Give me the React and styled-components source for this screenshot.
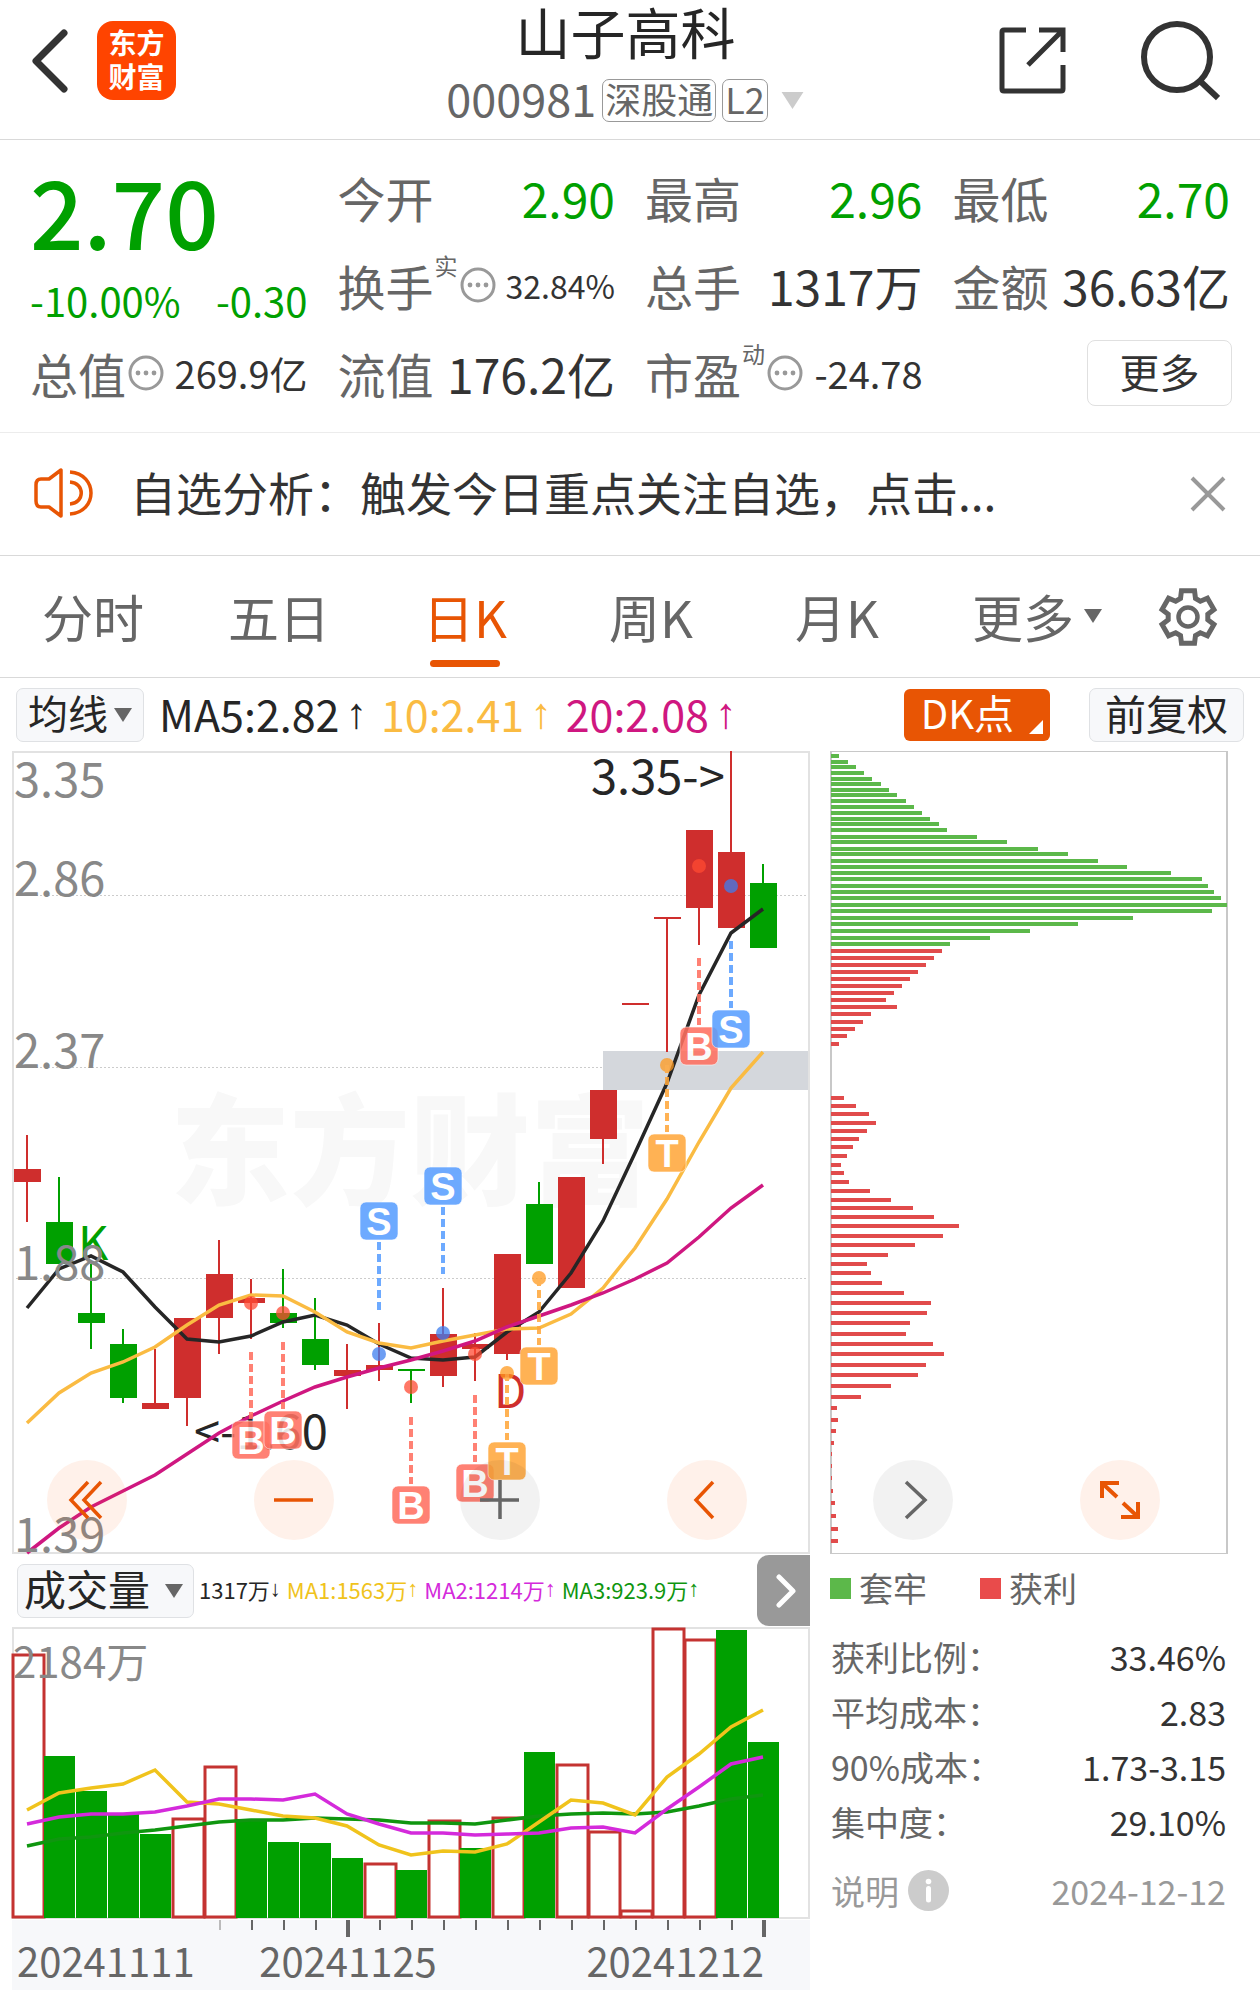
import React, { useState } from "react";
import styled, { createGlobalStyle } from "styled-components";

const GREEN = "#00a000";
const RED = "#cf2e2d";
const ORANGE = "#e85504";

const GlobalStyle = createGlobalStyle`
  * {
    box-sizing: border-box;
  }
  body {
    margin: 0;
    background: #fff;
    color: #333;
    font-family: "Noto Sans CJK SC", "Noto Sans", sans-serif;
  }
  button,
  select {
    margin: 0;
    padding: 0;
    border: none;
    background: none;
    color: inherit;
    font-family: inherit;
    cursor: pointer;
  }
  svg {
    display: block;
  }
`;

// header
const Header = styled.header`
  display: grid;
  grid-template-columns: 1fr auto 1fr;
  height: 140px;
  padding: 0 40px 0 31px;
  border-bottom: 1px solid #d9d9d9;
`;

const HeaderSide = styled.div`
  display: flex;
  align-items: center;
  gap: ${(props) => props.$gap};
  justify-content: ${(props) => (props.$end ? "flex-end" : "flex-start")};
  padding-bottom: 18px;
`;

const IconButton = styled.button`
  display: flex;
  align-items: center;
  justify-content: center;
  flex: none;
`;

const Logo = styled.div`
  width: 79px;
  height: 79px;
  padding: 4px 0;
  border-radius: 16px;
  background: #ff4400;
  color: #fff;
  font-size: 28px;
  font-weight: 700;
  line-height: 34px;
  text-align: center;
`;

const TitleBox = styled.div`
  display: flex;
  flex-direction: column;
  align-items: center;
  gap: 19px;
`;

const StockName = styled.h1`
  margin: 0;
  color: #262626;
  font-size: 55px;
  font-weight: 400;
  line-height: 60px;
`;

const StockMeta = styled.div`
  display: flex;
  align-items: center;
  gap: 6px;
  height: 43px;
`;

const StockCode = styled.span`
  padding-bottom: 6px;
  color: #666;
  font-size: 45px;
  line-height: 43px;
`;

const Tag = styled.span`
  height: 43px;
  padding: 0 2px;
  border: 1px solid #999;
  border-radius: 7px;
  color: #666;
  font-size: 36px;
  line-height: 37px;
`;

const MetaArrow = styled(IconButton)`
  margin-left: 6px;
`;

// quote
const Quote = styled.section`
  display: grid;
  grid-template-columns: repeat(4, 1fr);
  grid-template-rows: repeat(3, 88px);
  column-gap: 30px;
  height: 293px;
  padding: 13px 30px 15px;
  border-bottom: 1px solid #ececec;
`;

const PriceBox = styled.div`
  grid-row: span 2;
  color: ${GREEN};
`;

const Price = styled.div`
  font-size: 94px;
  font-weight: 500;
  line-height: 112px;
`;

const Change = styled.div`
  display: flex;
  justify-content: space-between;
  padding-top: 10px;
  font-size: 40px;
  line-height: 50px;
`;

const Item = styled.div`
  display: flex;
  align-items: center;
  justify-content: space-between;
  white-space: nowrap;
`;

const ItemLabel = styled.span`
  display: flex;
  align-items: center;
  color: #666;
  font-size: 48px;
  line-height: 88px;
`;

const InfoButton = styled(IconButton)`
  margin-left: 2px;
`;

const Mark = styled.small`
  align-self: flex-start;
  padding: 8px 0 0 1px;
  font-size: 23px;
  line-height: 32px;
`;

const ItemValue = styled.span`
  color: ${(props) => props.$color || "#333"};
  font-size: ${(props) => props.$size || "48px"};
  line-height: 88px;
`;

const MoreButton = styled.button`
  align-self: center;
  justify-self: end;
  width: 145px;
  height: 66px;
  margin-right: -2px;
  padding-bottom: 4px;
  border: 1px solid #e0e0e0;
  border-radius: 8px;
  font-size: 40px;
  line-height: 58px;
`;

// notice
const Notice = styled.div`
  display: flex;
  align-items: center;
  height: 123px;
  padding: 0 34px;
  border-bottom: 1px solid #d9d9d9;
`;

const NoticeText = styled.a`
  flex: 1;
  padding: 0 0 6px 36px;
  color: #333;
  font-size: 46px;
  line-height: 60px;
  text-decoration: none;
  white-space: nowrap;
`;

// tabs
const Tabs = styled.nav`
  display: grid;
  grid-template-columns: repeat(6, 186fr) 144fr;
  height: 122px;
  border-bottom: 1px solid #d9d9d9;
`;

const Tab = styled.button`
  display: flex;
  flex-direction: column;
  align-items: center;
  justify-content: flex-end;
  gap: 8px;
  padding-bottom: 10px;
  padding-left: ${(props) => (props.$more ? "28px" : "0")};
  color: ${(props) => (props.$active ? ORANGE : "#666")};
  font-size: 51px;
  line-height: 72px;
  white-space: nowrap;

  &::after {
    content: "";
    width: 70px;
    height: 7px;
    border-radius: 4px;
    background: ${(props) => (props.$active ? ORANGE : "transparent")};
  }
`;

const TabLabel = styled.span`
  display: flex;
  align-items: center;
  gap: 10px;
`;

// indicator bars
const Bar = styled.div`
  display: flex;
  align-items: center;
  height: 73px;
  padding: 0 16px;
`;

const Legend = styled.div`
  display: flex;
  flex: 1;
  gap: ${(props) => props.$gap};
  padding-left: ${(props) => props.$indent};
  padding-bottom: 4px;
  font-size: ${(props) => props.$size};
  line-height: 50px;
  white-space: nowrap;
`;

const LegendItem = styled.span`
  display: flex;
  color: ${(props) => props.$color};
`;

const Arrow = styled.span`
  padding-left: ${(props) => props.$gap || "0"};
  font-family: "Liberation Sans", sans-serif;
`;

const Picker = styled.label`
  display: flex;
  align-items: center;
  gap: ${(props) => props.$gap};
  height: 54px;
  padding: ${(props) => props.$pad};
  border: 1px solid #dfe1e4;
  border-radius: 7px;
  background: #f7f8fa;
`;

const PickerSelect = styled.select`
  appearance: none;
  height: 52px;
  padding-bottom: 5px;
  color: #262626;
  font-size: ${(props) => props.$size};
  line-height: 46px;
`;

const DkButton = styled.button`
  display: flex;
  align-items: flex-end;
  gap: 15px;
  height: 52px;
  padding: 0 7px 7px 17px;
  border-radius: 6px;
  background: ${ORANGE};
  color: #fff;
  font-size: 40px;
  line-height: 44px;
`;

const AdjustButton = styled.button`
  height: 54px;
  margin-left: 39px;
  padding: 0 15px 5px;
  border: 1px solid #dfe1e4;
  border-radius: 7px;
  background: #f7f8fa;
  color: #262626;
  font-size: 41px;
  line-height: 46px;
`;

// charts
const Columns = styled.div`
  position: relative;
  display: grid;
  grid-template-columns: 798fr 398fr;
  column-gap: 20px;
  padding: 0 32px 0 12px;
`;

const Chart = styled.svg`
  width: 100%;
  height: auto;
  overflow: visible;
  font-family: "Noto Sans CJK SC", sans-serif;
`;

const FloatBar = styled.div`
  position: absolute;
  left: 47px;
  right: 100px;
  bottom: 14px;
  display: flex;
  justify-content: space-between;
  pointer-events: none;
`;

const RoundButton = styled.button`
  display: flex;
  align-items: center;
  justify-content: center;
  width: 80px;
  height: 80px;
  border-radius: 50%;
  background: ${(props) =>
    props.$muted ? "rgba(0, 0, 0, 0.05)" : "rgba(255, 100, 20, 0.09)"};
  color: ${(props) => (props.$muted ? "#666" : ORANGE)};
  pointer-events: auto;
`;

const VolumeBar = styled.div`
  display: flex;
  align-items: center;
  height: 73px;
  padding-left: 5px;
`;

const NextButton = styled.button`
  display: flex;
  align-items: center;
  justify-content: center;
  flex: none;
  width: 53px;
  height: 71px;
  padding-left: 4px;
  border-radius: 12px 0 0 12px;
  background: #999;
`;

const CostLegend = styled.div`
  display: flex;
  align-items: center;
  height: 78px;
  padding-bottom: 10px;
  gap: 53px;
  color: #666;
  font-size: 34px;
  line-height: 40px;
`;

const CostKey = styled.span`
  display: flex;
  align-items: center;
  gap: 8px;

  &::before {
    content: "";
    width: 21px;
    height: 21px;
    background: ${(props) => props.$color};
  }
`;

const CostTable = styled.table`
  width: 100%;
  border-spacing: 0;
  font-size: 34px;
  line-height: 50px;

  th {
    padding: 0 0 5px 1px;
    color: #666;
    font-weight: 400;
    text-align: left;
  }
  td {
    padding: 0 2px 5px 0;
    text-align: right;
  }
`;

const CostFoot = styled.div`
  display: flex;
  align-items: center;
  gap: 9px;
  margin-top: 11px;
  padding-left: 1px;
  color: #999;
  font-size: 34px;
  line-height: 55px;

  time {
    flex: 1;
    padding-right: 2px;
    text-align: right;
  }
`;

// [high, top, bottom, low, up]
const candles = [
  [384, 418, 431, 471, 1],
  [426, 471, 513, 513, 0],
  [513, 562, 572, 598, 0],
  [578, 593, 647, 652, 0],
  [598, 652, 658, 658, 1],
  [567, 567, 647, 675, 1],
  [489, 523, 567, 603, 1],
  [528, 547, 552, 588, 1],
  [518, 562, 572, 577, 0],
  [547, 588, 614, 619, 0],
  [593, 619, 625, 658, 1],
  [572, 614, 619, 630, 1],
  [618, 618, 620, 652, 0],
  [537, 583, 625, 636, 1],
  [582, 593, 598, 630, 1],
  [503, 503, 603, 609, 1],
  [431, 453, 513, 513, 0],
  [426, 426, 537, 537, 1],
  [339, 339, 388, 413, 1],
  [252, 252, 254, 254, 1],
  [166, 166, 168, 301, 1],
  [79, 79, 157, 194, 1],
  [0, 101, 177, 177, 1],
  [113, 132, 197, 197, 0],
];

const priceLines = [
  {
    color: "#262626",
    data: [
      557, 518, 505, 521, 556, 588, 591, 585, 571, 564, 574, 593, 607, 609, 606,
      581, 561, 522, 470, 402, 332, 244, 182, 158,
    ],
  },
  {
    color: "#fabb42",
    data: [
      672, 642, 622, 611, 596, 574, 554, 544, 545, 561, 581, 592, 597, 590, 584,
      578, 577, 563, 537, 497, 448, 391, 337, 301,
    ],
  },
  {
    color: "#cf1780",
    data: [
      802, 777, 756, 740, 724, 703, 682, 665, 650, 636, 626, 617, 609, 600, 590,
      576, 565, 554, 542, 528, 512, 486, 457, 434,
    ],
  },
];

const priceLabels = [
  ["3.35", 46],
  ["2.86", 145],
  ["2.37", 317],
  ["1.88", 529],
  ["1.39", 801],
];

const tradeColors = { S: "#5a9fff", B: "#ff7061", T: "#ffa83d" };
const dotColors = { S: "#3d7ef0", B: "#ff4a33", T: "#ff9a1f" };

// [type, day, box y, dash start, dash end, dot y]
const trades = [
  ["B", 7, 689, 601, 668, 552],
  ["B", 8, 679, 591, 658, 562],
  ["S", 11, 470, 491, 559, 603],
  ["B", 12, 754, 666, 733, 636],
  ["S", 13, 435, 456, 523, 582],
  ["B", 14, 732, 644, 711, 603],
  ["T", 15, 710, 622, 689, 622],
  ["T", 16, 615, 527, 594, 527],
  ["T", 20, 402, 314, 381, 314],
  ["B", 21, 295, 207, 274, 115],
  ["S", 22, 278, 190, 257, 135],
];

// [y, length]
const lockedBars = [
  [5, 8], [11, 17], [16, 25], [22, 33], [28, 41], [33, 50], [39, 58],
  [44, 66], [50, 75], [56, 83], [62, 91], [68, 99], [73, 108], [79, 116],
  [86, 146], [91, 176], [98, 207], [103, 237], [110, 267], [116, 296],
  [122, 340], [128, 371], [135, 377], [141, 383], [147, 390], [154, 396],
  [160, 381], [167, 302], [173, 247], [180, 199], [187, 159], [193, 119],
];

const profitBars = [
  [200, 111], [207, 103], [214, 95], [221, 87], [228, 79], [235, 71],
  [242, 63], [249, 55], [256, 66], [263, 40], [271, 32], [278, 24],
  [285, 16], [293, 8], [347, 13], [355, 25], [363, 38], [372, 45],
  [380, 36], [388, 28], [396, 22], [405, 16], [414, 10], [422, 13],
  [431, 18], [440, 39], [449, 60], [457, 82], [466, 103], [475, 128],
  [485, 112], [494, 84], [504, 57], [513, 36], [522, 40], [532, 51],
  [542, 73], [552, 100], [562, 96], [572, 79], [583, 75], [593, 102],
  [603, 113], [614, 95], [624, 87], [635, 60], [646, 30], [657, 6],
  [669, 7], [680, 5], [692, 3], [703, 1], [715, 1], [727, 1], [740, 2],
  [752, 4], [765, 5], [778, 7], [790, 7],
];

// [top, up]
const volumes = [
  [27, 1], [129, 0], [164, 0], [187, 0], [207, 0], [191, 1], [139, 1],
  [192, 0], [215, 0], [216, 0], [231, 0], [236, 1], [243, 0], [193, 1],
  [221, 0], [190, 1], [125, 0], [137, 1], [204, 1], [283, 1], [1, 1],
  [12, 1], [3, 0], [115, 0],
];

const volumeLines = [
  {
    color: "#0f960f",
    data: [
      219, 212, 210, 206, 203, 199, 195, 193, 193, 191, 192, 193, 196, 196, 197,
      193, 189, 187, 186, 187, 185, 179, 172, 168,
    ],
  },
  {
    color: "#f0c31c",
    data: [
      183, 166, 161, 157, 143, 175, 177, 183, 189, 191, 199, 218, 228, 224, 225,
      217, 195, 173, 176, 188, 150, 127, 100, 83,
    ],
  },
  {
    color: "#d42adb",
    data: [
      197, 190, 187, 187, 185, 179, 172, 172, 173, 167, 187, 197, 206, 206, 208,
      207, 206, 201, 200, 206, 182, 160, 137, 130,
    ],
  },
];

const dayX = (i) => 15 + 32 * i;
const toPoints = (data) => data.map((y, i) => `${dayX(i)},${y}`).join(" ");

const Triangle = ({ width = 18, height = 14, color = "#666" }) => (
  <svg width={width} height={height} viewBox="0 0 18 14">
    <path d="M0 0H18L9 14Z" fill={color} />
  </svg>
);

const DotsIcon = () => (
  <svg width="36" height="36" viewBox="0 0 36 36">
    <circle cx="18" cy="18" r="16" fill="none" stroke="#999" strokeWidth="3" />
    <circle cx="10" cy="18" r="2.4" fill="#999" />
    <circle cx="18" cy="18" r="2.4" fill="#999" />
    <circle cx="26" cy="18" r="2.4" fill="#999" />
  </svg>
);

const polar = (deg, r) => {
  const a = (deg * Math.PI) / 180;
  return `${30 + r * Math.sin(a)},${30 - r * Math.cos(a)}`;
};

const gearPoints = [0, 60, 120, 180, 240, 300]
  .map((a) =>
    [
      polar(a - 22, 20),
      polar(a - 14, 27),
      polar(a + 14, 27),
      polar(a + 22, 20),
    ].join(" ")
  )
  .join(" ");

const GearIcon = () => (
  <svg width="60" height="60" viewBox="0 0 60 60" fill="none" stroke="#666">
    <polygon points={gearPoints} strokeWidth="5" />
    <circle cx="30" cy="30" r="9.5" strokeWidth="4.5" />
  </svg>
);

const Stroke = ({ d, width = 3.5 }) => (
  <svg
    width="40"
    height="40"
    viewBox="0 0 40 40"
    fill="none"
    stroke="currentColor"
    strokeWidth={width}
  >
    <path d={d} />
  </svg>
);

const floatButtons = [
  { label: "最早", d: "M21 2 4 20 21 38M34 2 17 20 34 38" },
  { label: "缩小", d: "M0 20H39" },
  { label: "放大", d: "M0 20H39M20 0V39", muted: true },
  { label: "向左", d: "M26 2 9 20 26 38" },
  { label: "向右", d: "M13 2 32 20 13 38", muted: true },
  {
    label: "全屏",
    d: "M2 18V3H19M3 4 17 17M38 22V37H21M37 36 23 23",
    width: 4,
  },
];

function PriceChart() {
  return (
    <Chart viewBox="0 0 798 803" role="img" aria-label="日K线">
      <text x="158" y="445" fontSize="120" fontWeight="900" fill="#f8f8f8">
        东方财富
      </text>
      {[144, 316, 527].map((y) => (
        <line
          key={y}
          x1="0"
          x2="798"
          y1={y + 0.5}
          y2={y + 0.5}
          stroke="#ccc"
          strokeDasharray="2 2"
        />
      ))}
      <rect x="591" y="300" width="207" height="39" fill="#d4d7dc" />
      <rect
        x="1"
        y="1"
        width="796"
        height="801"
        fill="none"
        stroke="#e2e2e2"
        strokeWidth="2"
      />
      {candles.map(([high, top, bottom, low, up], i) => (
        <g key={i} fill={up ? RED : GREEN}>
          <rect x={dayX(i) - 1} y={high} width="2" height={low - high} />
          <rect x={dayX(i) - 13} y={top} width="27" height={bottom - top} />
        </g>
      ))}
      <text x="66" y="509" fontSize="47" fill={GREEN}>
        K
      </text>
      <text x="482" y="657" fontSize="47" fill={RED}>
        D
      </text>
      <g fontSize="47" fill="#262626">
        <text x="579" y="43">
          3.35-&gt;
        </text>
        <text x="182" y="698">
          &lt;-1.60
        </text>
      </g>
      {priceLines.map((line) => (
        <polyline
          key={line.color}
          points={toPoints(line.data)}
          fill="none"
          stroke={line.color}
          strokeWidth="3.5"
        />
      ))}
      <g fontSize="47" fill="#888">
        {priceLabels.map(([text, y]) => (
          <text key={text} x="2" y={y}>
            {text}
          </text>
        ))}
      </g>
      {trades.map(([type, day, y, start, end, dot]) => (
        <g key={day} opacity="0.88">
          <circle
            cx={dayX(day)}
            cy={dot}
            r="7"
            fill={dotColors[type]}
            opacity="0.85"
          />
          <line
            x1={dayX(day)}
            x2={dayX(day)}
            y1={start}
            y2={end}
            stroke={tradeColors[type]}
            strokeWidth="4"
            strokeDasharray="8 4"
          />
          <rect
            x={dayX(day) - 19}
            y={y - 19}
            width="38"
            height="38"
            rx="6"
            fill={tradeColors[type]}
            stroke="#fff"
            strokeOpacity="0.6"
          />
          <text
            x={dayX(day)}
            y={y + 14}
            fill="#fff"
            fontFamily="Liberation Sans, sans-serif"
            fontSize="38"
            fontWeight="700"
            textAnchor="middle"
          >
            {type}
          </text>
        </g>
      ))}
    </Chart>
  );
}

function CostChart() {
  return (
    <Chart viewBox="0 0 398 803" role="img" aria-label="筹码分布">
      <path
        d="M1 0V803M397 0V803"
        fill="none"
        stroke="#c8c8c8"
        strokeWidth="2"
      />
      <path d="M0 0.5H398M0 802.5H398" stroke="#c8c8c8" />
      {lockedBars.map(([y, length]) => (
        <rect key={y} x="1" y={y - 2} width={length} height="4" fill="#5cb84a" />
      ))}
      {profitBars.map(([y, length]) => (
        <rect key={y} x="1" y={y - 2} width={length} height="4" fill="#e14b4b" />
      ))}
    </Chart>
  );
}

function VolumeChart() {
  return (
    <Chart viewBox="0 0 798 363" role="img" aria-label="成交量">
      <rect
        x="1"
        y="1"
        width="796"
        height="290"
        fill="none"
        stroke="#e2e2e2"
        strokeWidth="2"
      />
      {volumes.map(([top, up], i) =>
        up ? (
          <rect
            key={i}
            x={32 * i + 1}
            y={top + 1}
            width="31"
            height={289 - top}
            fill="#fff"
            stroke="#c43331"
            strokeWidth="3"
          />
        ) : (
          <rect
            key={i}
            x={32 * i}
            y={top}
            width="31"
            height={291 - top}
            fill={GREEN}
          />
        )
      )}
      {volumeLines.map((line) => (
        <polyline
          key={line.color}
          points={toPoints(line.data)}
          fill="none"
          stroke={line.color}
          strokeWidth="3.5"
        />
      ))}
      <text x="1" y="51" fontSize="42" fill="#888">
        2184万
      </text>
      <rect y="293" width="798" height="70" fill="#f7f8fa" />
      {candles.map((_, i) => {
        if (i < 6) return null;
        const major = i === 10 || i === 23;
        return (
          <rect
            key={i}
            x={dayX(i) - (major ? 1 : 0)}
            y="293"
            width={major ? 4 : 2}
            height={major ? 17 : 10}
            fill={i === 6 ? "#bbb" : "#666"}
          />
        );
      })}
      <g fontSize="40" fill="#666">
        <text x="5" y="350">
          20241111
        </text>
        <text x="336" y="350" textAnchor="middle">
          20241125
        </text>
        <text x="752" y="350" textAnchor="end">
          20241212
        </text>
      </g>
    </Chart>
  );
}

export default function App() {
  const [tab, setTab] = useState("日K");
  const [noticeOpen, setNoticeOpen] = useState(true);

  return (
    <>
      <GlobalStyle />
      <Header>
        <HeaderSide $gap="29px">
          <IconButton aria-label="返回">
            <svg width="37" height="64" viewBox="0 0 37 64" fill="none">
              <path
                d="M33 4 5 32 33 60"
                stroke="#333"
                strokeWidth="7"
                strokeLinecap="round"
                strokeLinejoin="round"
              />
            </svg>
          </IconButton>
          <Logo>
            东方
            <br />
            财富
          </Logo>
        </HeaderSide>
        <TitleBox>
          <StockName>山子高科</StockName>
          <StockMeta>
            <StockCode>000981</StockCode>
            <Tag>深股通</Tag>
            <Tag>L2</Tag>
            <MetaArrow aria-label="切换股票">
              <Triangle width={25} height={17} color="#ccc" />
            </MetaArrow>
          </StockMeta>
        </TitleBox>
        <HeaderSide $gap="74px" $end>
          <IconButton aria-label="分享">
            <svg
              width="67"
              height="67"
              viewBox="0 0 67 67"
              fill="none"
              stroke="#333"
              strokeWidth="5"
            >
              <path d="M27 3H5Q3 3 3 5V62Q3 64 5 64H62Q64 64 64 62V38" />
              <path d="M40 3H64V25M63 4 29 38" />
            </svg>
          </IconButton>
          <IconButton aria-label="搜索">
            <svg
              width="80"
              height="80"
              viewBox="0 0 80 80"
              fill="none"
              stroke="#333"
              strokeWidth="6"
            >
              <circle cx="37" cy="36" r="33" />
              <path d="M60 60 78 77" />
            </svg>
          </IconButton>
        </HeaderSide>
      </Header>

      <Quote>
        <PriceBox>
          <Price>2.70</Price>
          <Change>
            <span>-10.00%</span>
            <span>-0.30</span>
          </Change>
        </PriceBox>
        <Item>
          <ItemLabel>今开</ItemLabel>
          <ItemValue $color={GREEN}>2.90</ItemValue>
        </Item>
        <Item>
          <ItemLabel>最高</ItemLabel>
          <ItemValue $color={GREEN}>2.96</ItemValue>
        </Item>
        <Item>
          <ItemLabel>最低</ItemLabel>
          <ItemValue $color={GREEN}>2.70</ItemValue>
        </Item>
        <Item>
          <ItemLabel>
            换手<Mark>实</Mark>
            <InfoButton aria-label="换手说明">
              <DotsIcon />
            </InfoButton>
          </ItemLabel>
          <ItemValue $size="32px">32.84%</ItemValue>
        </Item>
        <Item>
          <ItemLabel>总手</ItemLabel>
          <ItemValue>1317万</ItemValue>
        </Item>
        <Item>
          <ItemLabel>金额</ItemLabel>
          <ItemValue>36.63亿</ItemValue>
        </Item>
        <Item>
          <ItemLabel>
            总值
            <InfoButton aria-label="总值说明">
              <DotsIcon />
            </InfoButton>
          </ItemLabel>
          <ItemValue $size="38px">269.9亿</ItemValue>
        </Item>
        <Item>
          <ItemLabel>流值</ItemLabel>
          <ItemValue>176.2亿</ItemValue>
        </Item>
        <Item>
          <ItemLabel>
            市盈<Mark>动</Mark>
            <InfoButton aria-label="市盈说明">
              <DotsIcon />
            </InfoButton>
          </ItemLabel>
          <ItemValue $size="38px">-24.78</ItemValue>
        </Item>
        <MoreButton>更多</MoreButton>
      </Quote>

      {noticeOpen && (
        <Notice>
          <svg
            width="60"
            height="52"
            viewBox="0 0 60 52"
            fill="none"
            stroke={ORANGE}
            strokeWidth="3.5"
            strokeLinejoin="round"
          >
            <path d="M27 2V48L15 39H7Q2 39 2 33V17Q2 11 7 11H15Z" />
            <path d="M36 4C64 6 64 44 36 46M36 14C51 15 51 35 36 36" />
          </svg>
          <NoticeText href="#analysis">
            自选分析：触发今日重点关注自选，点击...
          </NoticeText>
          <IconButton aria-label="关闭" onClick={() => setNoticeOpen(false)}>
            <svg width="36" height="36" viewBox="0 0 36 36">
              <path d="M2 2 34 34M34 2 2 34" stroke="#999" strokeWidth="4" />
            </svg>
          </IconButton>
        </Notice>
      )}

      <Tabs>
        {["分时", "五日", "日K", "周K", "月K"].map((name) => (
          <Tab key={name} $active={tab === name} onClick={() => setTab(name)}>
            <TabLabel>{name}</TabLabel>
          </Tab>
        ))}
        <Tab $more>
          <TabLabel>
            更多
            <Triangle />
          </TabLabel>
        </Tab>
        <IconButton aria-label="设置">
          <GearIcon />
        </IconButton>
      </Tabs>

      <Bar>
        <Picker $gap="6px" $pad="0 11px">
          <PickerSelect $size="40px" aria-label="主图指标">
            <option>均线</option>
          </PickerSelect>
          <Triangle />
        </Picker>
        <Legend $size="43px" $gap="14px" $indent="15px">
          <LegendItem $color="#262626">
            MA5:2.82<Arrow $gap="6px">↑</Arrow>
          </LegendItem>
          <LegendItem $color="#fabb42">
            10:2.41<Arrow $gap="6px">↑</Arrow>
          </LegendItem>
          <LegendItem $color="#cf1780">
            20:2.08<Arrow $gap="6px">↑</Arrow>
          </LegendItem>
        </Legend>
        <DkButton>
          DK点
          <svg width="14" height="14" viewBox="0 0 14 14">
            <path d="M14 0V14H0Z" fill="#fff" />
          </svg>
        </DkButton>
        <AdjustButton>前复权</AdjustButton>
      </Bar>

      <Columns>
        <PriceChart />
        <CostChart />
        <FloatBar>
          {floatButtons.map((item) => (
            <RoundButton
              key={item.label}
              aria-label={item.label}
              $muted={item.muted}
            >
              <Stroke d={item.d} width={item.width} />
            </RoundButton>
          ))}
        </FloatBar>
      </Columns>

      <Columns>
        <div>
          <VolumeBar>
            <Picker $gap="14px" $pad="0 10px 0 6px">
              <PickerSelect $size="42px" aria-label="副图指标">
                <option>成交量</option>
              </PickerSelect>
              <Triangle />
            </Picker>
            <Legend $size="22px" $gap="6px" $indent="5px">
              <LegendItem $color="#262626">
                1317万<Arrow>↓</Arrow>
              </LegendItem>
              <LegendItem $color="#f0c31c">
                MA1:1563万<Arrow>↑</Arrow>
              </LegendItem>
              <LegendItem $color="#d42adb">
                MA2:1214万<Arrow>↑</Arrow>
              </LegendItem>
              <LegendItem $color="#0f960f">
                MA3:923.9万<Arrow>↑</Arrow>
              </LegendItem>
            </Legend>
            <NextButton aria-label="更多指标">
              <svg width="20" height="36" viewBox="0 0 20 36" fill="none">
                <path
                  d="M3 4 17 18 3 32"
                  stroke="#fff"
                  strokeWidth="5"
                  strokeLinecap="round"
                  strokeLinejoin="round"
                />
              </svg>
            </NextButton>
          </VolumeBar>
          <VolumeChart />
        </div>
        <div>
          <CostLegend>
            <CostKey $color="#5cb84a">套牢</CostKey>
            <CostKey $color="#e94b4b">获利</CostKey>
          </CostLegend>
          <CostTable>
            <tbody>
              <tr>
                <th scope="row">获利比例：</th>
                <td>33.46%</td>
              </tr>
              <tr>
                <th scope="row">平均成本：</th>
                <td>2.83</td>
              </tr>
              <tr>
                <th scope="row">90%成本：</th>
                <td>1.73-3.15</td>
              </tr>
              <tr>
                <th scope="row">集中度：</th>
                <td>29.10%</td>
              </tr>
            </tbody>
          </CostTable>
          <CostFoot>
            说明
            <IconButton aria-label="说明详情">
              <svg width="41" height="41" viewBox="0 0 41 41">
                <circle cx="20.5" cy="20.5" r="20.5" fill="#ccc" />
                <circle cx="20.5" cy="11.5" r="2.8" fill="#fff" />
                <path
                  d="M20.5 18.5V30"
                  stroke="#fff"
                  strokeWidth="5"
                  strokeLinecap="round"
                />
              </svg>
            </IconButton>
            <time>2024-12-12</time>
          </CostFoot>
        </div>
      </Columns>
    </>
  );
}
